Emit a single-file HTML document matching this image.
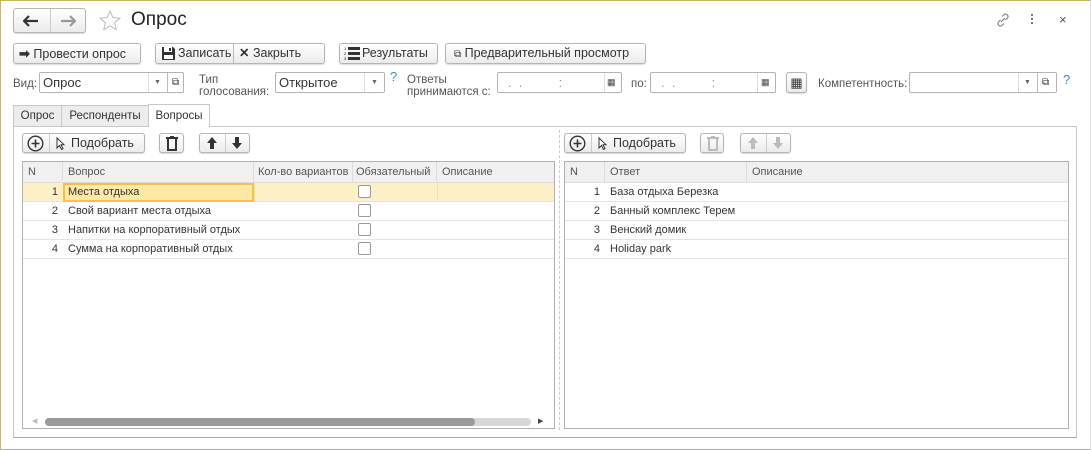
<!DOCTYPE html>
<html><head><meta charset="utf-8"><style>
*{box-sizing:border-box;margin:0;padding:0}
body{width:1091px;height:450px;background:#fff;font-family:"Liberation Sans",Arial,sans-serif;font-size:12px;color:#333;position:relative;overflow:hidden}
.a{position:absolute}
.btn{position:absolute;border:1px solid #b5b5b5;border-radius:3px;background:linear-gradient(#fff,#ebebeb);box-shadow:0 1px 1px rgba(0,0,0,.15);height:21px;line-height:19px;color:#333;white-space:nowrap;font-size:12.5px}
.inp{position:absolute;border:1px solid #b3b3b3;border-radius:2px;height:21px;background:#fff;line-height:19px;font-size:13px;color:#333}
.lbl{position:absolute;color:#555;font-size:11.5px;line-height:12px}
.sep{position:absolute;top:0;bottom:0;width:1px;background:#ccc}
.th{position:absolute;top:0;height:21px;line-height:21px;color:#555;border-right:1px solid #ddd;padding-left:5px;font-size:11px;white-space:nowrap;overflow:hidden}
.row{position:absolute;left:0;right:0;height:19px;border-bottom:1px solid #e4e4e4;line-height:19px;font-size:11px}
.n{position:absolute;width:35px;text-align:right}
.cb{position:absolute;width:13px;height:13px;border:1px solid #999;border-radius:2px;background:#fff;top:2px}
</style></head><body>
<div class="a" style="left:0;top:0;width:1091px;height:450px;border-left:1px solid #c9b55a;border-top:1px solid #c9b55a;border-bottom:1px solid #aaa;border-right:1px solid #ddd"></div>

<!-- nav -->
<div class="btn" style="left:13px;top:8px;width:73px;height:25px">
<svg class="a" style="left:9px;top:6px" width="16" height="12" viewBox="0 0 16 12"><path d="M1 6h14M6 1L1 6l5 5" fill="none" stroke="#333" stroke-width="2.2"/></svg>
<div class="sep" style="left:36px"></div>
<svg class="a" style="left:46px;top:6px" width="16" height="12" viewBox="0 0 16 12"><path d="M1 6h14M10 1l5 5-5 5" fill="none" stroke="#999" stroke-width="2.2"/></svg></div>
<svg class="a" style="left:98px;top:9px" width="24" height="24" viewBox="0 0 24 24"><path d="M12 2l2.9 6.5 7 .6-5.3 4.6 1.6 6.9L12 17l-6.2 3.6 1.6-6.9L2.1 9.1l7-.6z" fill="none" stroke="#bbb" stroke-width="1"/></svg>
<div class="a" style="left:131px;top:9px;font-size:19px;color:#222">Опрос</div>
<svg class="a" style="left:995px;top:12px" width="16" height="16" viewBox="0 0 16 16"><path d="M6 10l4-4M7 4.5l2-2a2.5 2.5 0 013.5 3.5l-2 2M9 11.5l-2 2A2.5 2.5 0 013.5 10l2-2" fill="none" stroke="#777" stroke-width="1"/></svg>
<div class="a" style="left:1031px;top:14px;width:2px;height:2px;background:#777;box-shadow:0 4px #777,0 8px #777"></div>
<div class="a" style="left:1059px;top:12px;font-size:13px;color:#555">×</div>

<!-- toolbar -->
<div class="btn" style="left:13px;top:43px;width:128px;padding-left:5px"><b style="font-size:13px">➡</b> Провести опрос</div>
<div class="btn" style="left:155px;top:43px;width:170px">
<svg class="a" style="left:5px;top:2px" width="15" height="15" viewBox="0 0 15 15"><path d="M1 1h11l2 2v11H1z" fill="#333"/><rect x="3" y="1" width="8" height="5" fill="#fff"/><rect x="3" y="9" width="9" height="4" fill="#fff"/><rect x="8" y="2" width="2" height="3" fill="#333"/></svg>
<span class="a" style="left:22px">Записать</span><div class="sep" style="left:77px;background:#bbb"></div><span class="a" style="left:83px"><b>✕</b> Закрыть</span></div>
<div class="btn" style="left:339px;top:43px;width:99px">
<svg class="a" style="left:4px;top:3px" width="16" height="14" viewBox="0 0 16 14"><rect x="4" y="0" width="12" height="3" fill="#333"/><rect x="4" y="5" width="12" height="3" fill="#333"/><rect x="4" y="10" width="12" height="3" fill="#333"/><text x="0" y="3" font-size="4">1</text><text x="0" y="8" font-size="4">2</text><text x="0" y="13" font-size="4">3</text></svg>
<span class="a" style="left:22px">Результаты</span></div>
<div class="btn" style="left:445px;top:43px;width:201px;padding-left:8px"><span style="font-size:10px">⧉</span> Предварительный просмотр</div>

<!-- fields -->
<div class="lbl" style="left:13px;top:78px">Вид:</div>
<div class="inp" style="left:39px;top:72px;width:145px;padding-left:3px">Опрос
<div class="sep" style="left:108px;background:#ddd"></div><span class="a" style="left:114px;top:0;font-size:7px;color:#666">▼</span>
<div class="sep" style="left:127px;background:#bbb"></div><span class="a" style="left:132px;top:0;font-size:10px">⧉</span></div>
<div class="lbl" style="left:199px;top:74px">Тип<br>голосования:</div>
<div class="inp" style="left:275px;top:72px;width:110px;padding-left:3px">Открытое
<div class="sep" style="left:88px;background:#ddd"></div><span class="a" style="left:95px;top:0;font-size:7px;color:#666">▼</span></div>
<div class="a" style="left:390px;top:69px;color:#3a8cd8;font-size:13px">?</div>
<div class="lbl" style="left:407px;top:74px">Ответы<br>принимаются с:</div>
<div class="inp" style="left:497px;top:72px;width:125px;color:#999;padding-left:10px">.&nbsp;&nbsp;.&nbsp;&nbsp;&nbsp;&nbsp;&nbsp;&nbsp;&nbsp;&nbsp;&nbsp;&nbsp;:
<div class="sep" style="left:106px;background:#ddd"></div><span class="a" style="left:109px;top:0;font-size:9px;color:#444">▦</span></div>
<div class="lbl" style="left:631px;top:78px">по:</div>
<div class="inp" style="left:650px;top:72px;width:126px;color:#999;padding-left:10px">.&nbsp;&nbsp;.&nbsp;&nbsp;&nbsp;&nbsp;&nbsp;&nbsp;&nbsp;&nbsp;&nbsp;&nbsp;:
<div class="sep" style="left:106px;background:#ddd"></div><span class="a" style="left:110px;top:0;font-size:9px;color:#444">▦</span></div>
<div class="btn" style="left:786px;top:72px;width:21px;text-align:center;font-size:13px">▦</div>
<div class="lbl" style="left:818px;top:78px">Компетентность:</div>
<div class="inp" style="left:909px;top:72px;width:148px">
<div class="sep" style="left:108px;background:#ddd"></div><span class="a" style="left:114px;top:0;font-size:7px;color:#666">▼</span>
<div class="sep" style="left:127px;background:#bbb"></div><span class="a" style="left:132px;top:0;font-size:10px">⧉</span></div>
<div class="a" style="left:1063px;top:72px;color:#3a8cd8;font-size:13px">?</div>

<!-- tabs -->
<div class="a" style="left:13px;top:105px;width:49px;height:22px;border:1px solid #c8c8c8;background:#ececec;text-align:center;line-height:20px;font-size:11.5px">Опрос</div>
<div class="a" style="left:61px;top:105px;width:88px;height:22px;border:1px solid #c8c8c8;background:#ececec;text-align:center;line-height:20px;font-size:11.5px">Респонденты</div>
<div class="a" style="left:148px;top:104px;width:62px;height:23px;border:1px solid #c8c8c8;border-bottom:none;background:#fff;text-align:center;line-height:22px;z-index:2;font-size:11.5px">Вопросы</div>
<div class="a" style="left:13px;top:126px;width:1064px;height:312px;border:1px solid #c8c8c8;border-bottom-color:#aaa"></div>

<!-- left toolbar -->
<div class="btn" style="left:22px;top:133px;width:123px;height:20px;line-height:18px">
<svg class="a" style="left:4px;top:1px" width="17" height="17" viewBox="0 0 17 17"><circle cx="8.5" cy="8.5" r="7.3" fill="none" stroke="#333" stroke-width="1.4"/><path d="M8.5 4.5v8M4.5 8.5h8" stroke="#333" stroke-width="1.6"/></svg>
<div class="sep" style="left:26px"></div>
<svg class="a" style="left:33px;top:3px" width="10" height="14" viewBox="0 0 10 14"><path d="M1 1v10l2.5-2.5 2 4 1.5-.8-2-4H8z" fill="#fff" stroke="#333"/></svg>
<span class="a" style="left:48px">Подобрать</span></div>
<div class="btn" style="left:159px;top:133px;width:25px;height:20px">
<svg class="a" style="left:5px;top:2px" width="14" height="15" viewBox="0 0 14 15"><path d="M1 2h12M5 1h4M3 3v11h8V3" fill="none" stroke="#333" stroke-width="2"/></svg></div>
<div class="btn" style="left:199px;top:133px;width:51px;height:20px">
<svg class="a" style="left:6px;top:2px" width="12" height="14" viewBox="0 0 12 14"><path d="M6 1L1 7h3v6h4V7h3z" fill="#333"/></svg>
<div class="sep" style="left:25px"></div>
<svg class="a" style="left:31px;top:2px" width="12" height="14" viewBox="0 0 12 14"><path d="M6 13L1 7h3V1h4v6h3z" fill="#333"/></svg></div>

<!-- left table -->
<div class="a" style="left:22px;top:161px;width:533px;height:268px;border:1px solid #b0b0b0;overflow:hidden">
<div class="a" style="left:0;top:0;right:0;height:21px;background:#f0f0f0;border-bottom:1px solid #ddd"></div>
<div class="th" style="left:0;width:40px">N</div>
<div class="th" style="left:40px;width:191px">Вопрос</div>
<div class="th" style="left:231px;width:99px;padding-left:4px">Кол-во вариантов</div>
<div class="th" style="left:330px;width:84px;padding-left:3px">Обязательный</div>
<div class="th" style="left:414px;width:120px;border:none">Описание</div>
<div class="row" style="top:21px;background:#fbf0c6"><span class="n">1</span><div class="a" style="left:40px;top:0;width:191px;height:19px;border:2px solid #f5c242;background:#fde9a4;padding-left:3px;line-height:15px">Места отдыха</div><div class="a" style="left:231px;width:1px;top:0;bottom:0;background:#f0e3b0"></div><div class="a" style="left:414px;width:1px;top:0;bottom:0;background:#f0e3b0"></div><div class="cb" style="left:335px"></div></div>
<div class="row" style="top:40px"><span class="n">2</span><span class="a" style="left:45px">Свой вариант места отдыха</span><div class="cb" style="left:335px"></div></div>
<div class="row" style="top:59px"><span class="n">3</span><span class="a" style="left:45px">Напитки на корпоративный отдых</span><div class="cb" style="left:335px"></div></div>
<div class="row" style="top:78px"><span class="n">4</span><span class="a" style="left:45px">Сумма на корпоративный отдых</span><div class="cb" style="left:335px"></div></div>
<div class="a" style="left:22px;top:256px;width:486px;height:8px;border-radius:4px;background:#d8d8d8"></div>
<div class="a" style="left:22px;top:256px;width:430px;height:8px;border-radius:4px;background:#9a9a9a"></div>
<div class="a" style="left:9px;top:255px;font-size:7px;color:#bbb">◀</div>
<div class="a" style="left:515px;top:255px;font-size:7px;color:#444">▶</div>
</div>

<div class="a" style="left:559px;top:130px;width:0;height:300px;border-left:1px dashed #ccc"></div>

<!-- right toolbar -->
<div class="btn" style="left:564px;top:133px;width:122px;height:20px;line-height:18px">
<svg class="a" style="left:4px;top:1px" width="17" height="17" viewBox="0 0 17 17"><circle cx="8.5" cy="8.5" r="7.3" fill="none" stroke="#333" stroke-width="1.4"/><path d="M8.5 4.5v8M4.5 8.5h8" stroke="#333" stroke-width="1.6"/></svg>
<div class="sep" style="left:26px"></div>
<svg class="a" style="left:33px;top:3px" width="10" height="14" viewBox="0 0 10 14"><path d="M1 1v10l2.5-2.5 2 4 1.5-.8-2-4H8z" fill="#fff" stroke="#333"/></svg>
<span class="a" style="left:48px">Подобрать</span></div>
<div class="btn" style="left:700px;top:133px;width:24px;height:20px">
<svg class="a" style="left:5px;top:2px" width="14" height="15" viewBox="0 0 14 15"><path d="M1 2h12M5 1h4M3 3v11h8V3" fill="none" stroke="#bbb" stroke-width="2"/></svg></div>
<div class="btn" style="left:740px;top:133px;width:51px;height:20px">
<svg class="a" style="left:6px;top:2px" width="12" height="14" viewBox="0 0 12 14"><path d="M6 1L1 7h3v6h4V7h3z" fill="#bbb"/></svg>
<div class="sep" style="left:25px"></div>
<svg class="a" style="left:31px;top:2px" width="12" height="14" viewBox="0 0 12 14"><path d="M6 13L1 7h3V1h4v6h3z" fill="#bbb"/></svg></div>

<!-- right table -->
<div class="a" style="left:564px;top:161px;width:505px;height:268px;border:1px solid #b0b0b0;overflow:hidden">
<div class="a" style="left:0;top:0;right:0;height:21px;background:#f0f0f0;border-bottom:1px solid #ddd"></div>
<div class="th" style="left:0;width:40px">N</div>
<div class="th" style="left:40px;width:142px">Ответ</div>
<div class="th" style="left:182px;width:320px;border:none">Описание</div>
<div class="row" style="top:21px"><span class="n">1</span><span class="a" style="left:45px">База отдыха Березка</span></div>
<div class="row" style="top:40px"><span class="n">2</span><span class="a" style="left:45px">Банный комплекс Терем</span></div>
<div class="row" style="top:59px"><span class="n">3</span><span class="a" style="left:45px">Венский домик</span></div>
<div class="row" style="top:78px"><span class="n">4</span><span class="a" style="left:45px">Holiday park</span></div>
</div>
</body></html>
